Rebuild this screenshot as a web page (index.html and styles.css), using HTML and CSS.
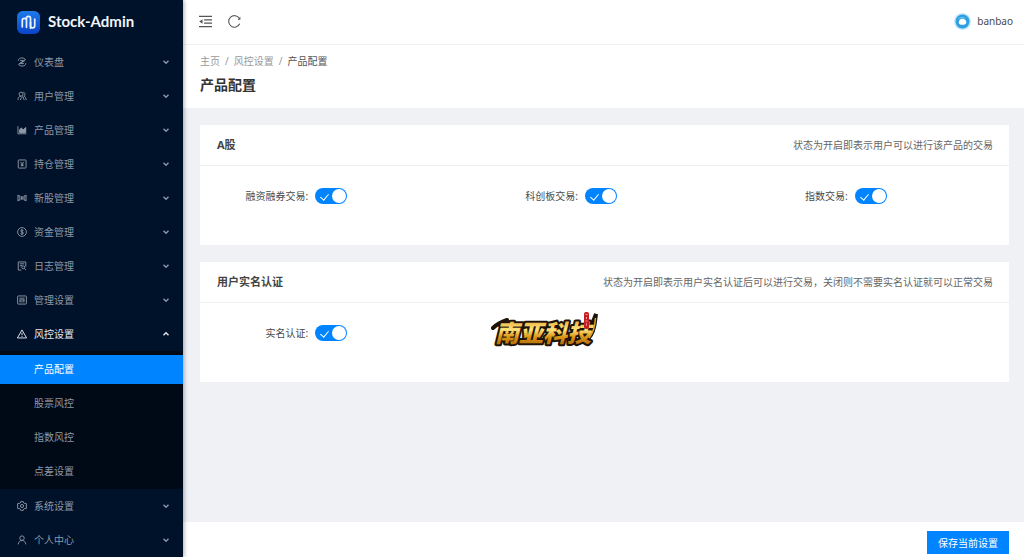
FILE: index.html
```html
<!DOCTYPE html>
<html lang="zh-CN">
<head>
<meta charset="utf-8">
<meta name="viewport" content="width=device-width, initial-scale=1">
<title>产品配置 - Stock-Admin</title>
<link rel="stylesheet" href="styles.css">
</head>
<body>
<svg class="defs" aria-hidden="true">
  <symbol id="chev" viewBox="0 0 8 8"><path d="M1.500 2.800 4 5.200 6.500 2.800"/></symbol>
</svg>
<div class="app">
  <aside class="sidebar">
    <a class="brand" href="#">
      <svg class="brand-mark" viewBox="0 0 24 24" aria-hidden="true">
        <defs><linearGradient id="bg" x1="0" y1="0" x2="0" y2="1"><stop offset="0" stop-color="#1f7bea"/><stop offset="1" stop-color="#0a43c8"/></linearGradient></defs>
        <rect width="24" height="24" rx="6" fill="url(#bg)"/>
        <path d="M5.500 16.500V9.800a2.200 2.200 0 0 1 4.400 0V17M9.900 9V7.800a2.100 2.100 0 0 1 4.200 0V15.500a2.200 2.200 0 0 0 4.400 0V8.500" fill="none" stroke="#e8f2ff" stroke-width="1.800" stroke-linecap="round"/>
        <path d="M14.100 18V12" stroke="#e8f2ff" stroke-width="1.800" stroke-linecap="round"/>
      </svg>
      <span>Stock-Admin</span>
    </a>
    <nav class="menu" aria-label="主菜单">
      <button class="item" type="button"><svg class="icon" viewBox="0 0 16 16"><path d="M2 6c0-3 2.500-4.500 6-4.500 2.500 0 4.500 1 5.500 2.500L3 11M14 10c0 3-2.500 4.500-6 4.500-2.500 0-4.500-1-5.500-2.500L13 5.500M5 5.500h5M6 10.500h5"/></svg><span>仪表盘</span><svg class="chev"><use href="#chev"/></svg></button>
      <button class="item" type="button"><svg class="icon" viewBox="0 0 16 16"><circle cx="6.500" cy="5" r="3.200"/><path d="M1.500 14.500c0-4 2-6.200 5-6.200M10 2c3 .2 4 4.500 1 6 2.500 1 3.500 3.500 3.500 6.500M5.500 14.500c.5-3 2-4.500 4-5.500l2 5.500"/></svg><span>用户管理</span><svg class="chev"><use href="#chev"/></svg></button>
      <button class="item" type="button"><svg class="icon" viewBox="0 0 16 16"><path d="M1.500 2v12H15"/><path d="M4 12V8l3-3.500L9.500 8 14 4v8z" fill="currentColor"/></svg><span>产品管理</span><svg class="chev"><use href="#chev"/></svg></button>
      <button class="item" type="button"><svg class="icon" viewBox="0 0 16 16"><rect x="2" y="1.500" width="12.500" height="13" rx="1"/><path d="M5.500 4.500 8.200 7.500l2.800-3M8.200 7.500V12M6 8h4.500M6 10.200h4.500"/></svg><span>持仓管理</span><svg class="chev"><use href="#chev"/></svg></button>
      <button class="item" type="button"><svg class="icon" viewBox="0 0 16 16"><path d="M1.500 3v10M1.500 4.500h3v7h-3M7 5v6M9.500 5v6M7 8h2.500M14.500 3v10M14.500 4.500h-3v7h3"/></svg><span>新股管理</span><svg class="chev"><use href="#chev"/></svg></button>
      <button class="item" type="button"><svg class="icon" viewBox="0 0 16 16"><circle cx="8" cy="8" r="7"/><path d="M10.300 6C10 4.300 5.800 4.300 5.800 6.400c0 2 4.600 1.200 4.600 3.300S6 11.800 5.600 10M8 3.500v9"/></svg><span>资金管理</span><svg class="chev"><use href="#chev"/></svg></button>
      <button class="item" type="button"><svg class="icon" viewBox="0 0 16 16"><path d="M7 14.500H2v-13h12V9M4.500 4.500h7M4.500 7.500H8"/><circle cx="10" cy="10" r="2.300"/><path d="m11.700 11.700 2.600 2.800"/></svg><span>日志管理</span><svg class="chev"><use href="#chev"/></svg></button>
      <button class="item" type="button"><svg class="icon" viewBox="0 0 16 16"><rect x="1" y="1.500" width="14" height="13" rx="1"/><path d="M5 4v8M8 4v8M11 4v8M4 9.500h2M7 6h2M10 9h2"/></svg><span>管理设置</span><svg class="chev"><use href="#chev"/></svg></button>
      <button class="item item-open" type="button" aria-expanded="true"><svg class="icon" viewBox="0 0 16 16"><path d="M8 1.500 15.300 14.300H.7zM8 6v4M8 11.200v1.400"/></svg><span>风控设置</span><svg class="chev"><use href="#chev"/></svg></button>
      <div class="submenu">
        <a class="subitem active" href="#" aria-current="page">产品配置</a>
        <a class="subitem" href="#">股票风控</a>
        <a class="subitem" href="#">指数风控</a>
        <a class="subitem" href="#">点差设置</a>
      </div>
      <button class="item" type="button"><svg class="icon" viewBox="0 0 16 16"><path d="M6 1h4l.6 2 2 1.100 2-.5 1 3.400L14 8l1.600 1-1 3.400-2-.5-2 1.100-.6 2H6l-.6-2-2-1.100-2 .5-1-3.400L2 8 .4 7l1-3.400 2 .5 2-1.100z"/><circle cx="8" cy="8" r="2.500"/></svg><span>系统设置</span><svg class="chev"><use href="#chev"/></svg></button>
      <button class="item" type="button"><svg class="icon" viewBox="0 0 16 16"><circle cx="8" cy="5" r="3.600"/><path d="M2 15c.3-4 2.500-6.200 6-6.200s5.700 2.200 6 6.200"/></svg><span>个人中心</span><svg class="chev"><use href="#chev"/></svg></button>
    </nav>
  </aside>

  <div class="page">
    <header class="topbar">
      <button class="tool" type="button" aria-label="收起菜单"><svg viewBox="0 0 14 14"><path d="M0 1.500h14M5.500 5.200H14M5.500 8.800H14M0 12.500h14"/><path d="M3.800 4.700v4.600L.3 7z" fill="currentColor" stroke="none"/></svg></button>
      <button class="tool" type="button" aria-label="刷新"><svg viewBox="0 0 14 14"><path d="M12.600 9.500A6.200 6.200 0 1 1 12.300 3.800"/><path d="M13.300 2v3h-3z" fill="currentColor" stroke="none"/></svg></button>
      <a class="user" href="#">
        <svg class="avatar" viewBox="0 0 18 18" aria-hidden="true"><circle cx="9" cy="9" r="8.800" fill="#b5e1f8"/><circle cx="9" cy="9" r="7.300" fill="#2f9fe3"/><path d="M5 10c0-2.600 1.700-4 4-4s4 1.400 4 4c0 1.800-1.700 2.500-4 2.500s-4-.7-4-2.500z" fill="#fff"/><path d="M4 7c1.500-3 6-3.500 8.500-1.200-2.500-.6-5.500-.6-8.500 1.200z" fill="#6fc3ef"/></svg>
        <span>banbao</span>
      </a>
    </header>

    <section class="page-head">
      <nav class="crumbs" aria-label="面包屑"><a href="#">主页</a><i>/</i><a href="#">风控设置</a><i>/</i><span>产品配置</span></nav>
      <h1>产品配置</h1>
    </section>

    <main class="content">
      <section class="card">
        <header class="card-head"><h2>A股</h2><p>状态为开启即表示用户可以进行该产品的交易</p></header>
        <div class="card-body">
          <div class="field"><label for="margin">融资融券交易:</label><input id="margin" class="switch" type="checkbox" role="switch" checked></div>
          <div class="field"><label for="star">科创板交易:</label><input id="star" class="switch" type="checkbox" role="switch" checked></div>
          <div class="field"><label for="index">指数交易:</label><input id="index" class="switch" type="checkbox" role="switch" checked></div>
        </div>
      </section>
      <section class="card">
        <header class="card-head"><h2>用户实名认证</h2><p>状态为开启即表示用户实名认证后可以进行交易，关闭则不需要实名认证就可以正常交易</p></header>
        <div class="card-body">
          <div class="field"><label for="realname">实名认证:</label><input id="realname" class="switch" type="checkbox" role="switch" checked></div>
        </div>
        <svg class="stamp" viewBox="0 0 108 42" role="img" aria-label="南亚科技">
          <defs><linearGradient id="gold" x1="0" y1="0" x2="0" y2="1"><stop offset="0" stop-color="#d98f14"/><stop offset=".45" stop-color="#ffe27a"/><stop offset=".65" stop-color="#dd9717"/><stop offset="1" stop-color="#9a5507"/></linearGradient></defs>
          <path class="stroke-dark" d="M2 20C6 16 10 14 16 12M97 31c5-5 7-14 8-25-2 6-3 9-6 12"/>
          <text class="stamp-text" x="4" y="34">南亚科技</text>
          <path d="M98 30c4-5 6-11 6.500-20" fill="none" stroke="#e3a326" stroke-width="1.500"/>
          <rect x="93" y="4" width="5" height="17" rx="2" fill="#c41e22"/>
          <path d="M94.500 6.500h2M95.500 9v2M94.500 13h2M95.500 15.500v2" stroke="#f3a0a0" stroke-width="1"/>
        </svg>
      </section>
    </main>

    <footer class="actions"><button class="save" type="button">保存当前设置</button></footer>
  </div>
</div>
</body>
</html>
```
FILE: styles.css
```css
* { box-sizing: border-box; }

body {
  margin: 0;
  font: 10px/16px "Noto Sans", "Noto Sans CJK SC", sans-serif;
  color: #4a4a4a;
  background: #eff1f5;
}

h1, h2, p { margin: 0; }
a { color: inherit; text-decoration: none; }
button { font: inherit; color: inherit; border: 0; background: none; padding: 0; cursor: pointer; }
.defs { position: absolute; width: 0; height: 0; }

.app { display: flex; min-height: 100vh; }

/* Sidebar */
.sidebar {
  flex: 0 0 183px;
  background: #001229;
  color: #8e98a6;
  box-shadow: 1px 0 4px rgba(0, 10, 50, .35);
  z-index: 1;
}
.brand {
  display: flex;
  align-items: center;
  gap: 8px;
  height: 44px;
  padding-left: 17px;
  color: #f2f5fa;
  font: 700 15px/20px Lato, sans-serif;
}
.brand span { padding-bottom: 2px; }
.brand-mark { width: 23px; height: 23px; }
.menu { display: flex; flex-direction: column; padding-top: 1px; }
.item {
  display: flex;
  align-items: center;
  gap: 7px;
  height: 34px;
  padding: 0 13px 0 17px;
  text-align: left;
}
.item span { flex: 1; }
.icon { width: 10px; height: 10px; fill: none; stroke: currentColor; stroke-width: 1.5; }
.chev { width: 8px; height: 8px; fill: none; stroke: currentColor; stroke-width: 1.4; }
.item-open { color: #e6e9ee; }
.item-open .chev { transform: rotate(180deg); }
.submenu {
  display: flex;
  flex-direction: column;
  gap: 5px;
  padding: 4px 0 3px;
  background: #000a17;
}
.subitem { padding: 0 34px; line-height: 29px; }
.subitem.active { background: #0084ff; color: #fff; }

/* Page */
.page { flex: 1; min-width: 0; display: flex; flex-direction: column; }
.topbar {
  display: flex;
  align-items: center;
  gap: 16px;
  height: 45px;
  padding: 0 11px 2px 16px;
  background: #fff;
  border-bottom: 1px solid #f0f0f2;
}
.tool { display: flex; color: #555; }
.tool svg { width: 13px; height: 13px; fill: none; stroke: currentColor; stroke-width: 1.2; }
.user { display: flex; align-items: center; gap: 6px; margin-left: auto; }
.avatar { width: 17px; height: 17px; }

.page-head { padding: 8px 17px 11px; background: #fff; }
.crumbs { display: flex; gap: 5px; color: #999; }
.crumbs i { font-style: normal; }
.crumbs span { color: #555; }
h1 { margin-top: 4px; font-size: 14px; line-height: 24px; font-weight: 700; color: #333; }

.content { flex: 1; display: flex; flex-direction: column; gap: 17px; padding: 17px 15px 17px 17px; }
.card { position: relative; background: #fff; }
.card-head {
  display: flex;
  align-items: center;
  justify-content: space-between;
  gap: 16px;
  min-height: 41px;
  padding: 0 16px 0 17px;
  border-bottom: 1px solid #efeff2;
}
.card-head h2 { font-size: 11px; font-weight: 700; color: #444; }
.card-head p { color: #666; }
.card-body { display: grid; grid-template-columns: repeat(3, 1fr); padding: 22px 0 41px; }
.field { display: grid; grid-template-columns: 5fr 7fr; align-items: center; column-gap: 5px; }
.field label { padding-right: 2px; text-align: right; }
.switch {
  appearance: none;
  position: relative;
  width: 32px;
  height: 16px;
  margin: 0;
  border-radius: 8px;
  background: #bbb;
  cursor: pointer;
}
.switch::after {
  content: "";
  position: absolute;
  top: 1px;
  left: 1px;
  width: 14px;
  height: 14px;
  border-radius: 50%;
  background: #fff;
}
.switch:checked { background: #0084ff; }
.switch:checked::after { left: 17px; }
.switch:checked::before {
  content: "";
  position: absolute;
  top: 4px;
  left: 7px;
  width: 4px;
  height: 7px;
  border: solid #fff;
  border-width: 0 1px 1px 0;
  transform: rotate(40deg);
}

.stamp { position: absolute; left: 36%; top: 46px; width: 108px; height: 42px; overflow: visible; }
.stamp-text {
  font-family: "Noto Sans CJK SC", sans-serif;
  font-size: 24px;
  font-weight: 900;
  font-style: italic;
  fill: url(#gold);
  stroke: #1d1308;
  stroke-width: 4px;
  stroke-linejoin: round;
  paint-order: stroke;
}
.stroke-dark { fill: none; stroke: #1d1308; stroke-width: 4px; stroke-linecap: round; }

.actions { display: flex; justify-content: flex-end; padding: 9px 15px 3px; background: #fff; }
.save { height: 23px; padding: 0 11px; background: #0084ff; color: #fff; }
```
